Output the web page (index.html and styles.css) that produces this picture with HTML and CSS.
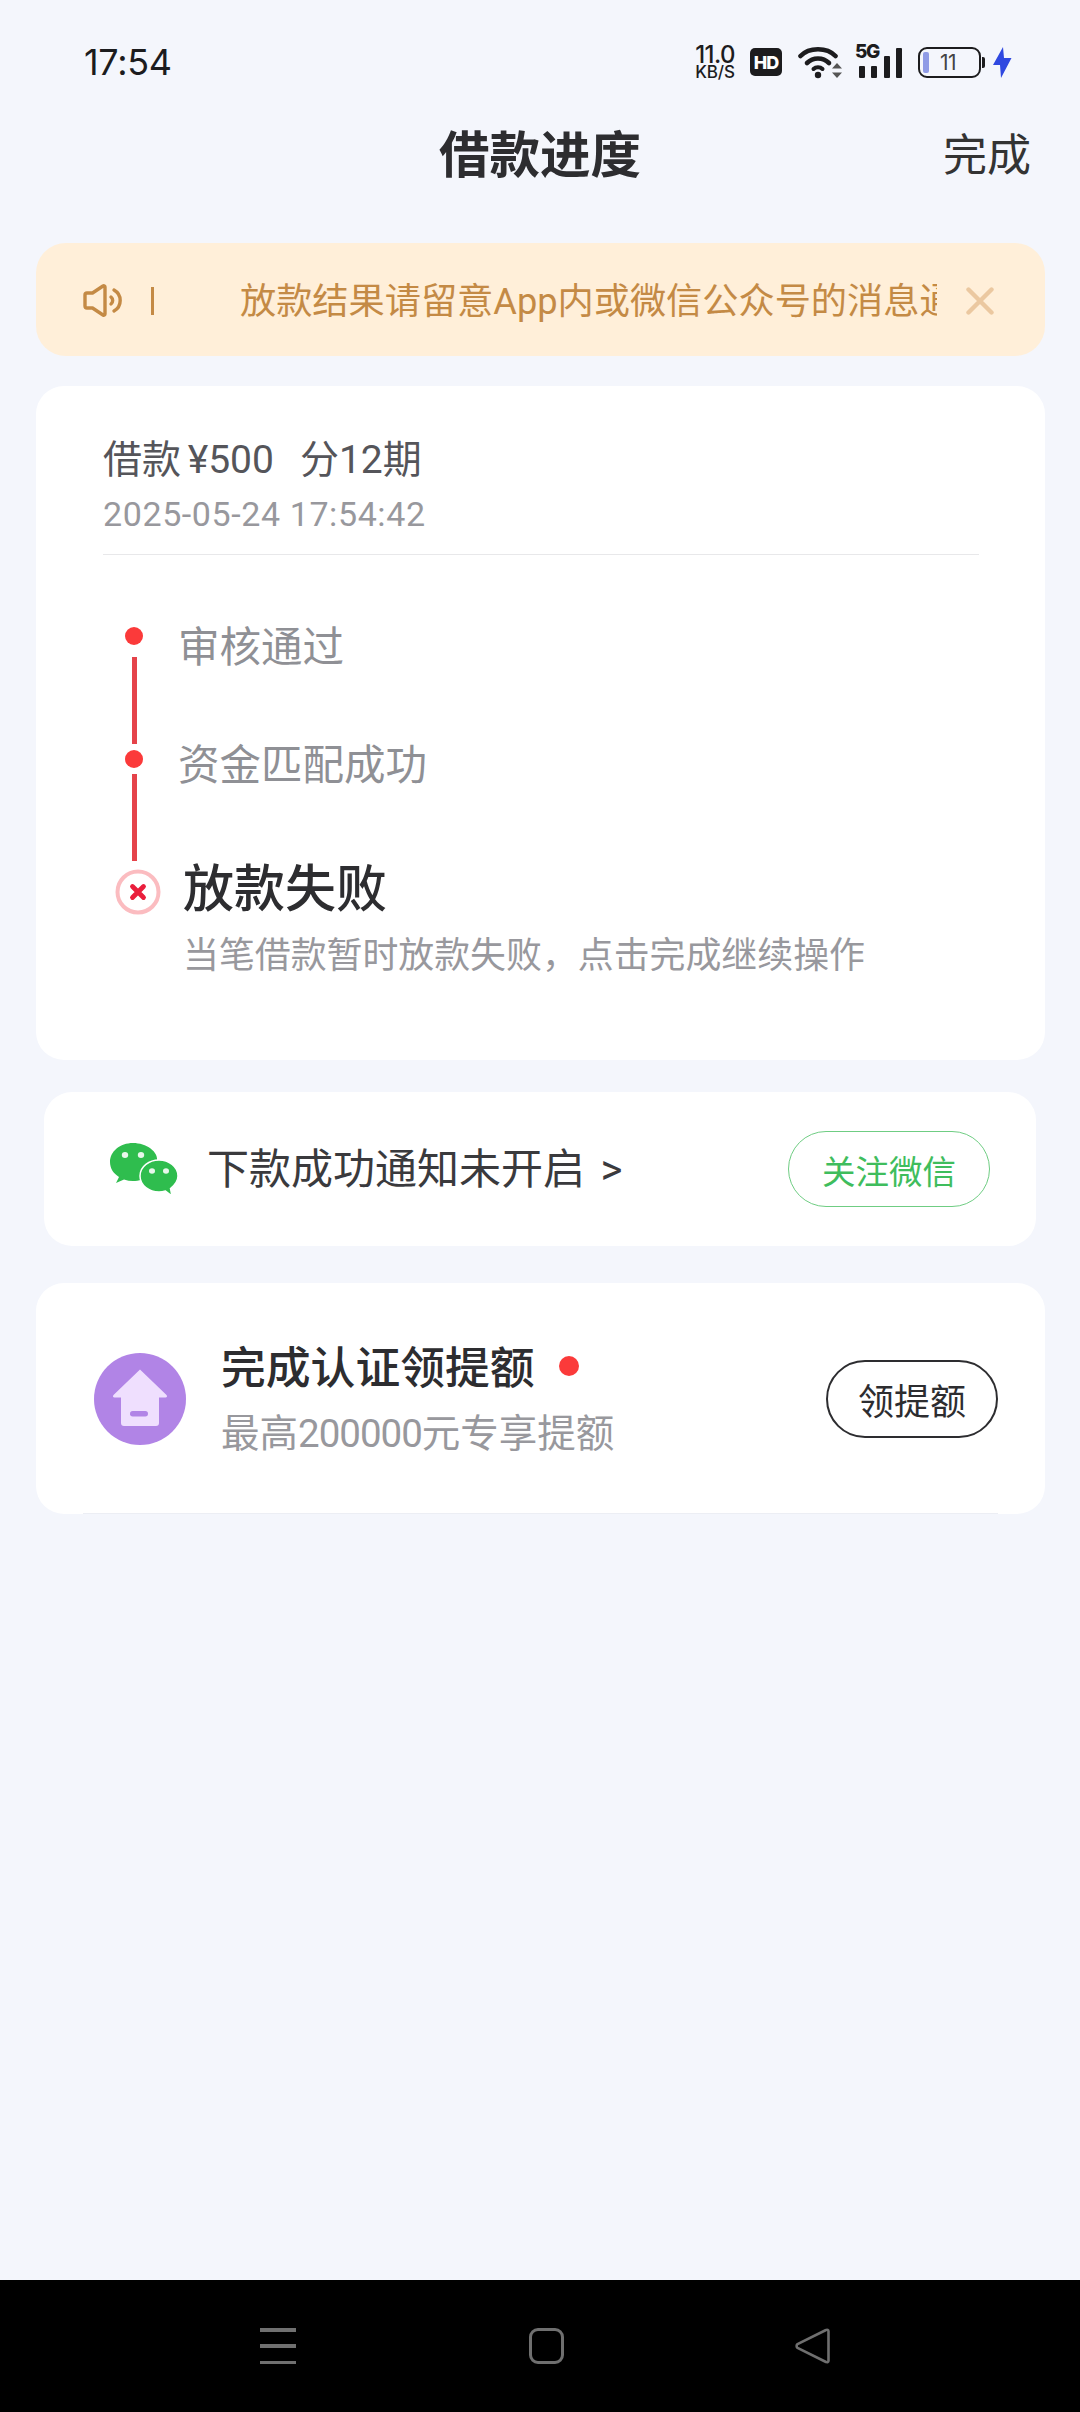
FILE: index.html
```html
<!DOCTYPE html>
<html lang="zh">
<head>
<meta charset="utf-8">
<title>借款进度</title>
<link rel="stylesheet" href="styles.css">
</head>
<body>
<div class="page">
  <div class="statusbar">
    <span class="time">17:54</span>
    <div class="status-icons">
      <div class="speed"><span class="speed-num">11.0</span><span class="speed-unit">KB/S</span></div>
      <span class="hd">HD</span>
      <svg class="wifi" width="45" height="34" viewBox="0 0 45 34"><path d="M2.500 11C11 2 29 2 37.500 11" fill="none" stroke="#1c1c1e" stroke-width="4.600" stroke-linecap="round"/><path d="M9 18C15 12 25 12 31 18" fill="none" stroke="#1c1c1e" stroke-width="4.600" stroke-linecap="round"/><path d="M15.500 24C18 21.500 22 21.500 24.500 24" fill="none" stroke="#1c1c1e" stroke-width="4" stroke-linecap="round"/><circle cx="20" cy="30" r="3.200" fill="#1c1c1e"/><path d="M39 18l5 5.500H34zM39 33l-5-5.500h10z" fill="#555"/></svg>
      <div class="signal">
        <span class="five-g">5G</span>
        <svg width="43" height="30" viewBox="0 0 43 30"><rect x="0" y="18" width="6" height="12" rx="1" fill="#1c1c1e"/><rect x="12" y="18" width="6" height="12" rx="1" fill="#1c1c1e"/><rect x="25" y="8" width="6" height="22" rx="1" fill="#1c1c1e"/><rect x="37" y="0" width="6" height="30" rx="1" fill="#1c1c1e"/></svg>
      </div>
      <div class="battery"><span class="battery-level"></span><span class="battery-num">11</span></div>
      <span class="battery-cap"></span>
      <svg class="bolt" width="20" height="31" viewBox="0 0 20 31"><path d="M11 0L1 18h7l1 13L19.500 11H12z" fill="#2f48e0"/></svg>
    </div>
  </div>

  <header class="navbar">
    <h1 class="nav-title">借款进度</h1>
    <span class="nav-action">完成</span>
  </header>

  <div class="notice">
    <svg class="notice-icon" width="40" height="33" viewBox="0 0 40 33"><path d="M4 9h5.500L20 2c1-.6 2 0 2 1v27c0 1-1 1.600-2 1L9.500 24H4c-1.200 0-2-.8-2-2V11c0-1.200.8-2 2-2z" fill="none" stroke="#c48a45" stroke-width="3.400" stroke-linejoin="round"/><path d="M28 13a4.500 4.500 0 0 1 0 7" fill="none" stroke="#c48a45" stroke-width="3.400" stroke-linecap="round"/><path d="M31 6a12 12 0 0 1 0 21" fill="none" stroke="#c48a45" stroke-width="3.400" stroke-linecap="round"/></svg>
    <span class="notice-bar"></span>
    <div class="notice-clip"><span class="notice-text">放款结果请留意App内或微信公众号的消息通知</span></div>
    <svg class="notice-close" width="28" height="28" viewBox="0 0 28 28"><path d="M2.500 2.500l23 23M25.500 2.500l-23 23" stroke="#ebc8a0" stroke-width="4.400" stroke-linecap="round"/></svg>
  </div>

  <section class="card card-progress">
    <div class="loan-head">
      <div class="loan-title"><span class="loan-amount">借款 ¥500</span><span>分12期</span></div>
      <div class="loan-date">2025-05-24 17:54:42</div>
    </div>
    <div class="steps">
      <div class="step step-one">
        <div class="rail"><span class="dot"></span><span class="line line-a"></span></div>
        <span class="step-label">审核通过</span>
      </div>
      <div class="step step-two">
        <div class="rail"><span class="dot"></span><span class="line line-b"></span></div>
        <span class="step-label">资金匹配成功</span>
      </div>
      <div class="step step-fail">
        <svg class="fail-icon" width="46" height="46" viewBox="0 0 46 46"><circle cx="23" cy="23" r="20.500" fill="#fff" stroke="#fbbcc0" stroke-width="4"/><path d="M17.500 17.500l11 11M28.500 17.500l-11 11" stroke="#ea1e3c" stroke-width="4.800" stroke-linecap="round"/></svg>
        <div class="fail-copy">
          <div class="fail-title">放款失败</div>
          <div class="fail-desc">当笔借款暂时放款失败，点击完成继续操作</div>
        </div>
      </div>
    </div>
  </section>

  <section class="card card-wechat">
    <svg class="wechat-icon" width="70" height="56" viewBox="0 0 70 56"><path d="M24 1C11 1 1 9.500 1 20c0 6.500 3.500 11.500 9 15l-3 6 8-3.500c3 1 6 1.500 9 1.500 12 0 24-8 24-19C50 9.500 37 1 24 1z" fill="#2fbd4e"/><path d="M69 34c0-9.500-9.300-16-19-16s-19 6.500-19 16 9.300 16 19 16c2.300 0 4.500-.4 6.500-1l6.500 5-1.500-7.500C66 43 69 39 69 34z" fill="#2fbd4e" stroke="#fff" stroke-width="1.500"/><ellipse cx="16" cy="13" rx="3.200" ry="3" fill="#e8f7eb"/><ellipse cx="32" cy="13" rx="3.200" ry="3" fill="#e8f7eb"/><ellipse cx="43" cy="29" rx="3" ry="2.800" fill="#e8f7eb"/><ellipse cx="57" cy="29" rx="3" ry="2.800" fill="#e8f7eb"/></svg>
    <span class="wechat-text">下款成功通知未开启 &gt;</span>
    <span class="btn-follow">关注微信</span>
  </section>

  <section class="card card-quota">
    <svg class="quota-icon" width="94" height="94" viewBox="0 0 94 94"><circle cx="47" cy="47" r="46" fill="#b184e6"/><path d="M47 17.500L73.500 43c1 1.200.5 2.500-1 2.500H66V71a3 3 0 0 1-3 3H31a3 3 0 0 1-3-3V45.500h-6.500c-1.500 0-2-1.300-1-2.500z" fill="#efdffe"/><rect x="37" y="59" width="18" height="5.500" rx="2.700" fill="#b184e6"/></svg>
    <div class="quota-copy">
      <div class="quota-title"><span>完成认证领提额</span><span class="quota-dot"></span></div>
      <div class="quota-desc">最高<span class="digits">200000</span>元专享提额</div>
    </div>
    <span class="btn-quota">领提额</span>
  </section>

  <div class="spacer"></div>

  <nav class="sysnav">
    <span class="menu-icon"><i></i><i></i><i></i></span>
    <span class="home-icon"></span>
    <svg width="35" height="36" viewBox="0 0 35 36"><path d="M31 2c1.200-.7 2.500 0 2.500 1.200v29.600c0 1.200-1.300 1.900-2.500 1.200L2.500 19.800c-1.200-.8-1.200-2.800 0-3.600z" fill="none" stroke="#6f6f6f" stroke-width="2.600" stroke-linejoin="round"/></svg>
  </nav>
</div>
</body>
</html>
```

FILE: styles.css
```css
* { box-sizing: border-box; }
html, body { margin: 0; padding: 0; }
body {
  width: 1080px;
  height: 2412px;
  overflow: hidden;
  background: #f4f6fc;
  font-family: "Roboto", "Noto Sans CJK SC", sans-serif;
  color: #2d2d30;
}
.page { height: 2412px; display: flex; flex-direction: column; }

.statusbar {
  height: 124px;
  padding: 0 68px 0 84px;
  display: flex;
  align-items: center;
  justify-content: space-between;
}
.time { font-family: "Inter", sans-serif; font-size: 36px; font-weight: 400; color: #1c1c1e; letter-spacing: -.3px; }
.status-icons { display: flex; align-items: center; }
.speed { display: flex; flex-direction: column; align-items: center; width: 44px; font-family: "Inter", sans-serif; color: #1c1c1e; margin-right: 13px; }
.speed-num { font-size: 24px; font-weight: 500; letter-spacing: -.6px; line-height: 20px; }
.speed-unit { font-size: 17px; font-weight: 500; line-height: 15px; letter-spacing: -.1px; white-space: nowrap; }
.hd { width: 32px; height: 28px; background: #1c1c1e; color: #fff; border-radius: 5px; font-family: "Inter", sans-serif; font-size: 18px; font-weight: 800; display: flex; align-items: center; justify-content: center; letter-spacing: -1px; margin-right: 16px; }
.wifi { margin-right: 12px; }
.signal { position: relative; width: 47px; height: 32px; margin-right: 16px; padding-left: 4px; display: flex; align-items: flex-end; }
.five-g { position: absolute; left: 0; top: -3px; font-family: "Inter", sans-serif; font-size: 19px; font-weight: 800; letter-spacing: -1.500px; color: #1c1c1e; line-height: 18px; }
.battery { width: 63px; height: 31px; border: 2px solid #1c1c1e; border-radius: 9px; display: flex; align-items: center; padding-left: 3px; }
.battery-level { width: 6px; height: 21px; border-radius: 2px; background: #8f9be6; }
.battery-num { font-family: "Inter", sans-serif; font-size: 21px; color: #444; margin-left: 11px; letter-spacing: -.5px; }
.battery-cap { width: 3px; height: 11px; background: #1c1c1e; border-radius: 0 2px 2px 0; margin: 0 7px 0 1px; }

.navbar {
  height: 60px;
  margin: 2px 0 57px;
  padding: 0 49px;
  position: relative;
  display: flex;
  align-items: center;
  justify-content: flex-end;
}
.nav-title { position: absolute; left: 0; right: 0; margin: 0; text-align: center; font-size: 50.500px; font-weight: 700; line-height: 60px; color: #2d2d30; }
.nav-action { font-size: 44px; line-height: 60px; color: #333; }

.notice {
  height: 113px;
  margin: 0 35px 30px 36px;
  padding: 2px 51px 0 47px;
  border-radius: 30px;
  background: #ffefd9;
  display: flex;
  align-items: center;
}
.notice-icon { flex: none; }
.notice-bar { width: 3px; height: 28px; margin-left: 28px; background: #c48a45; flex: none; }
.notice-clip { width: 697px; margin-left: 86px; padding-top: 2px; overflow: hidden; white-space: nowrap; flex: none; }
.notice-text { font-size: 36.200px; line-height: 50px; color: #c48a45; }
.notice-close { margin-left: auto; flex: none; }

.card { background: #fff; border-radius: 28px; }
.card-progress {
  height: 674px;
  margin: 0 35px 0 36px;
  padding: 0 67px;
}
.loan-head { height: 169px; padding-top: 52px; border-bottom: 1px solid #e8e8ea; margin-right: -1px; }
.loan-title { display: flex; gap: 26px; font-size: 39px; line-height: 44px; color: #55555a; font-weight: 400; }
.loan-amount { word-spacing: -3px; }
.loan-date { font-size: 34px; line-height: 40px; margin-top: 12px; color: #98989d; letter-spacing: .6px; }

.steps { padding-top: 72px; }
.step { display: flex; align-items: flex-start; }
.step-one { height: 123px; }
.step-two { height: 120px; }
.rail { width: 75px; display: flex; flex-direction: column; flex: none; padding-left: 22px; }
.dot { width: 18px; height: 18px; border-radius: 50%; background: #fb3a3a; }
.line { width: 5px; height: 87px; background: #e5434a; margin-left: 6.500px; }
.line-a { margin-top: 12px; }
.line-b { margin-top: 6px; }
.step-label { font-size: 41.500px; line-height: 48px; color: #8f9095; white-space: nowrap; }
.step-one .step-label { margin-top: -3px; }
.step-two .step-label { margin-top: -8px; }
.fail-icon { margin-left: 12px; margin-top: -1px; flex: none; }
.fail-copy { margin-left: 22px; margin-top: -13px; }
.fail-title { font-size: 51px; line-height: 66px; font-weight: 500; color: #2d2d30; }
.fail-desc { font-size: 35.900px; line-height: 50px; margin-top: 8px; color: #98989d; white-space: nowrap; }

.card-wechat {
  height: 154px;
  margin: 32px 44px 0;
  padding: 2px 46px 0 65px;
  display: flex;
  align-items: center;
}
.wechat-text { margin-left: 28px; font-size: 42px; color: #3a3a3d; line-height: 50px; word-spacing: 5px; }
.btn-follow { margin-left: auto; width: 202px; height: 76px; margin-top: -2px; border: 1.500px solid #6fcd83; border-radius: 38px; color: #3fbd5d; font-size: 33.500px; display: flex; align-items: center; justify-content: center; }

.card-quota {
  height: 231px;
  margin: 37px 35px 0 36px;
  padding: 0 47px 0 57px;
  display: flex;
  align-items: center;
  position: relative;
}
.card-quota::after { content: ""; position: absolute; left: 47px; right: 47px; bottom: 0; height: 1px; background: #eceef4; }
.quota-copy { margin-left: 34px; }
.quota-title { display: flex; align-items: center; font-size: 44.800px; line-height: 56px; margin-top: 2px; font-weight: 500; color: #2d2d30; }
.quota-dot { width: 20px; height: 20px; background: #fb3a3a; border-radius: 50%; margin-left: 24px; margin-top: -6px; }
.quota-desc { margin-top: 12px; font-size: 38.500px; line-height: 50px; color: #98989d; white-space: nowrap; }
.digits { letter-spacing: -1px; }
.btn-quota { margin-left: auto; width: 172px; height: 78px; border: 2px solid #2d2d30; border-radius: 39px; font-size: 36px; color: #2d2d30; display: flex; align-items: center; justify-content: center; }

.spacer { flex: 1; }
.sysnav {
  height: 132px;
  background: #000;
  display: flex;
  align-items: center;
  padding: 0 0 0 260px;
}
.menu-icon { width: 36px; height: 36px; display: flex; flex-direction: column; justify-content: space-between; margin-right: 233px; }
.menu-icon i { display: block; height: 3.500px; background: #707070; }
.home-icon { width: 35px; height: 36px; border: 3px solid #6f6f6f; border-radius: 9px; margin-right: 231px; }
```
